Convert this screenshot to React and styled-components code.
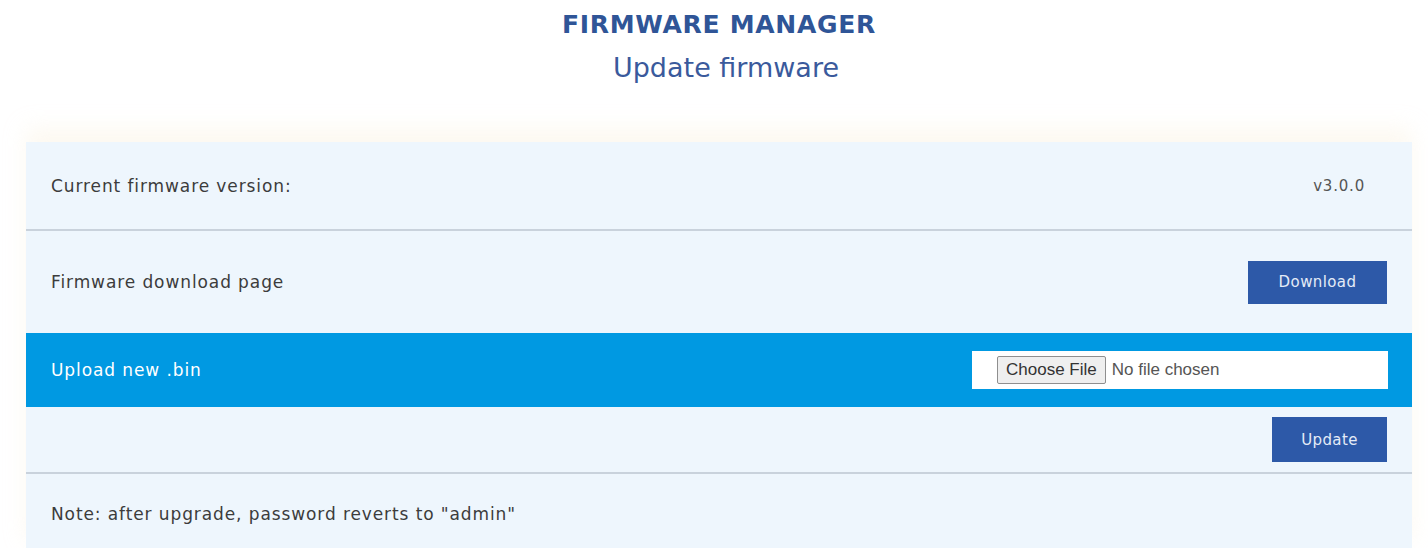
import React from 'react';
import styled, { createGlobalStyle } from 'styled-components';

const GlobalStyle = createGlobalStyle`
  html, body {
    margin: 0;
    padding: 0;
    background: #ffffff;
  }
  body {
    font-family: "DejaVu Sans", "Open Sans", sans-serif;
    color: #3c3c3c;
  }
`;

const Page = styled.div`
  width: 1386px;
  padding-left: 26px;
  display: flex;
  flex-direction: column;
  align-items: center;
`;

const Title = styled.h1`
  margin: 10px 0 0;
  font-size: 25px;
  font-weight: 700;
  color: #2f5597;
  letter-spacing: 0.7px;
  line-height: 30px;
`;

const SubTitle = styled.h2`
  margin: 12px 0 0;
  padding-left: 14px;
  font-size: 27px;
  font-weight: 400;
  color: #3a5a9c;
  line-height: 32px;
`;

const Table = styled.div`
  align-self: stretch;
  margin-top: 58px;
  background: #eef6fd;
  box-shadow: 0 -14px 20px rgba(250, 238, 215, 0.35);
  display: flex;
  flex-direction: column;
`;

const Row = styled.div`
  height: ${p => p.$h}px;
  display: flex;
  align-items: center;
  justify-content: space-between;
  padding: 0 25px;
  box-sizing: border-box;
  background: ${p => (p.$active ? '#0099e2' : 'transparent')};
  color: ${p => (p.$active ? '#ffffff' : '#3c3c3c')};
  border-bottom: ${p => (p.$line ? '2px solid #c9d2dc' : 'none')};
  font-size: 17px;
  letter-spacing: 0.9px;
`;

const Value = styled.span`
  font-size: 15px;
  letter-spacing: 0.8px;
  color: #555;
  margin-right: 22px;
`;

const Button = styled.button`
  width: ${p => p.$w}px;
  height: ${p => p.$h}px;
  padding: 0;
  border: none;
  background: #2d59a8;
  color: #e4ebf7;
  font-family: inherit;
  font-size: 15px;
  letter-spacing: 0.4px;
  cursor: pointer;
`;

const FileBox = styled.div`
  width: 416px;
  height: 38px;
  margin-right: -1px;
  background: #ffffff;
  display: flex;
  align-items: center;
  padding-left: 25px;
  box-sizing: border-box;
`;

const FileInput = styled.input`
  font-family: "Liberation Sans", Arial, sans-serif;
  font-size: 17px;
  letter-spacing: 0;
  color: #555;
  &::file-selector-button {
    font-family: "Liberation Sans", Arial, sans-serif;
    font-size: 17px;
    height: 28px;
    padding: 0 8px;
    margin-right: 6px;
    background: #efefef;
    border: 1px solid #8f8f8f;
    border-radius: 2px;
    color: #333;
  }
`;

export default function App() {
  return (
    <Page>
      <GlobalStyle />
      <Title>FIRMWARE MANAGER</Title>
      <SubTitle>Update firmware</SubTitle>
      <Table>
        <Row $h={89} $line>
          <span>Current firmware version:</span>
          <Value>v3.0.0</Value>
        </Row>
        <Row $h={102}>
          <span>Firmware download page</span>
          <Button $w={139} $h={43}>Download</Button>
        </Row>
        <Row $h={74} $active>
          <span>Upload new .bin</span>
          <FileBox>
            <FileInput type="file" accept=".bin" />
          </FileBox>
        </Row>
        <Row $h={67} $line>
          <span />
          <Button $w={115} $h={45}>Update</Button>
        </Row>
        <Row $h={80}>
          <span>Note: after upgrade, password reverts to "admin"</span>
        </Row>
      </Table>
    </Page>
  );
}
